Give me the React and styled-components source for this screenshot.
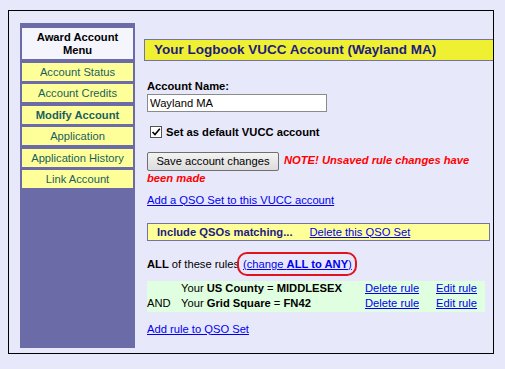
import styled, { createGlobalStyle } from 'styled-components';

const GlobalStyle = createGlobalStyle`
  html, body {
    margin: 0;
    padding: 0;
    background: #e8e8fb;
  }
  body {
    font-family: "Liberation Sans", Arial, sans-serif;
    font-size: 11.2px;
    color: #000;
  }
`;

const Page = styled.div`
  padding: 10px 0 0 8px;
`;

const Frame = styled.div`
  border: 1px solid #000;
  display: flex;
  align-items: stretch;
  padding: 12px 0 5px 11px;
  box-sizing: content-box;
  width: 473px;
  height: 325px;
`;

const Sidebar = styled.div`
  width: 111px;
  flex: none;
  background: #6b6ba7;
  padding: 5px 2px;
  display: flex;
  flex-direction: column;
  gap: 3.5px;
`;

const MenuHeader = styled.div`
  height: 31px;
  background: #f5f5fd;
  font-weight: bold;
  text-align: center;
  line-height: 13px;
  padding-top: 3px;
  box-sizing: border-box;
`;

const MenuItem = styled.div`
  height: 18px;
  background: #ffff99;
  color: #1a5f5f;
  text-align: center;
  line-height: 18px;
  font-weight: ${p => (p.$active ? 'bold' : 'normal')};
`;

const Main = styled.div`
  flex: 1;
  margin-left: 9px;
  padding-top: 16px;
`;

const TitleBar = styled.div`
  height: 22px;
  box-sizing: border-box;
  background: #f0f032;
  border: 1px solid #7373aa;
  border-right: none;
  color: #1c1c80;
  font-weight: bold;
  font-size: 13.5px;
  line-height: 20px;
  padding-left: 9px;
`;

const Content = styled.div`
  padding: 0 3px;
`;

const Label = styled.div`
  margin-top: 19px;
  font-weight: bold;
  line-height: 13px;
`;

const TextInput = styled.input`
  display: block;
  margin: 0.5px 0 0;
  width: 180px;
  height: 18px;
  box-sizing: border-box;
  border: 1px solid #8a8a8a;
  background: #fff;
  font-family: inherit;
  font-size: 11.2px;
  padding: 0 2px;
  outline: none;
`;

const CheckRow = styled.div`
  margin-top: 14px;
  display: flex;
  align-items: center;
  gap: 4px;
  padding-left: 3px;
  font-weight: bold;
  line-height: 13px;
`;

const CheckBox = styled.span`
  width: 12px;
  height: 12px;
  box-sizing: border-box;
  border: 1px solid #555;
  background: #fff;
  display: inline-flex;
  align-items: center;
  justify-content: center;
`;

const SaveBlock = styled.div`
  margin-top: 13px;
  line-height: 14px;
`;

const Button = styled.button`
  width: 132px;
  height: 19px;
  margin: 0 5px 0 0;
  padding: 0;
  border: 1px solid #707070;
  border-radius: 2px;
  background: linear-gradient(#f3f3f3, #dcdcdc);
  font-family: inherit;
  font-size: 11.2px;
  color: #000;
  vertical-align: middle;
`;

const Warning = styled.span`
  color: #ff0000;
  font-weight: bold;
  font-style: italic;
`;

const Link = styled.a`
  color: #0000ee;
  text-decoration: underline;
  cursor: pointer;
`;

const LinkLine = styled.div`
  margin-top: 9px;
  line-height: 13px;
`;

const SetBox = styled.div`
  margin-top: 16px;
  height: 18px;
  width: 343px;
  box-sizing: border-box;
  background: #ffff99;
  border: 1px solid #7373aa;
  display: flex;
  align-items: center;
  padding-left: 9px;
  gap: 17px;
`;

const SetTitle = styled.span`
  font-weight: bold;
  color: #1c1c80;
`;

const RulesLine = styled.div`
  margin-top: 17px;
  line-height: 13px;
`;

const Circled = styled.span`
  position: relative;
  margin-left: 4px;

  &::after {
    content: '';
    position: absolute;
    left: -6px;
    right: -5px;
    top: -6px;
    bottom: -6px;
    border: 2px solid #e0141e;
    border-radius: 10px;
    pointer-events: none;
  }
`;

const RuleTable = styled.div`
  margin-top: 10px;
  width: 338px;
  background: #e0ffe0;
  padding: 1px 0;
  display: grid;
  grid-template-columns: 34px 184px 71px 1fr;
  row-gap: 2px;
  line-height: 13.5px;
`;

const AddRule = styled.div`
  margin-top: 11px;
  line-height: 13px;
`;

const menu = [
  { label: 'Account Status' },
  { label: 'Account Credits' },
  { label: 'Modify Account', active: true },
  { label: 'Application' },
  { label: 'Application History' },
  { label: 'Link Account' },
];

const rules = [
  { join: '', field: 'US County', value: 'MIDDLESEX' },
  { join: 'AND', field: 'Grid Square', value: 'FN42' },
];

export default function App() {
  return (
    <>
      <GlobalStyle />
      <Page>
        <Frame>
          <Sidebar>
            <MenuHeader>
              Award Account
              <br />
              Menu
            </MenuHeader>
            {menu.map(m => (
              <MenuItem key={m.label} $active={m.active}>
                {m.label}
              </MenuItem>
            ))}
          </Sidebar>
          <Main>
            <TitleBar>Your Logbook VUCC Account (Wayland MA)</TitleBar>
            <Content>
              <Label>Account Name:</Label>
              <TextInput defaultValue="Wayland MA" />
              <CheckRow>
                <CheckBox>
                  <svg width="10" height="10" viewBox="0 0 10 10">
                    <path d="M1.5 5 L4 7.5 L8.8 1.8" fill="none" stroke="#000" strokeWidth="1.6" />
                  </svg>
                </CheckBox>
                Set as default VUCC account
              </CheckRow>
              <SaveBlock>
                <Button>Save account changes</Button>
                <Warning>NOTE! Unsaved rule changes have been made</Warning>
              </SaveBlock>
              <LinkLine>
                <Link>Add a QSO Set to this VUCC account</Link>
              </LinkLine>
              <SetBox>
                <SetTitle>Include QSOs matching...</SetTitle>
                <Link>Delete this QSO Set</Link>
              </SetBox>
              <RulesLine>
                <b>ALL</b> of these rules
                <Circled>
                  <Link>
                    (change <b>ALL to ANY</b>)
                  </Link>
                </Circled>
              </RulesLine>
              <RuleTable>
                {rules.map(r => [
                  <span key={r.field + 'j'}>{r.join}</span>,
                  <span key={r.field + 'f'}>
                    Your <b>{r.field}</b> = <b>{r.value}</b>
                  </span>,
                  <Link key={r.field + 'd'}>Delete rule</Link>,
                  <Link key={r.field + 'e'}>Edit rule</Link>,
                ])}
              </RuleTable>
              <AddRule>
                <Link>Add rule to QSO Set</Link>
              </AddRule>
            </Content>
          </Main>
        </Frame>
      </Page>
    </>
  );
}
